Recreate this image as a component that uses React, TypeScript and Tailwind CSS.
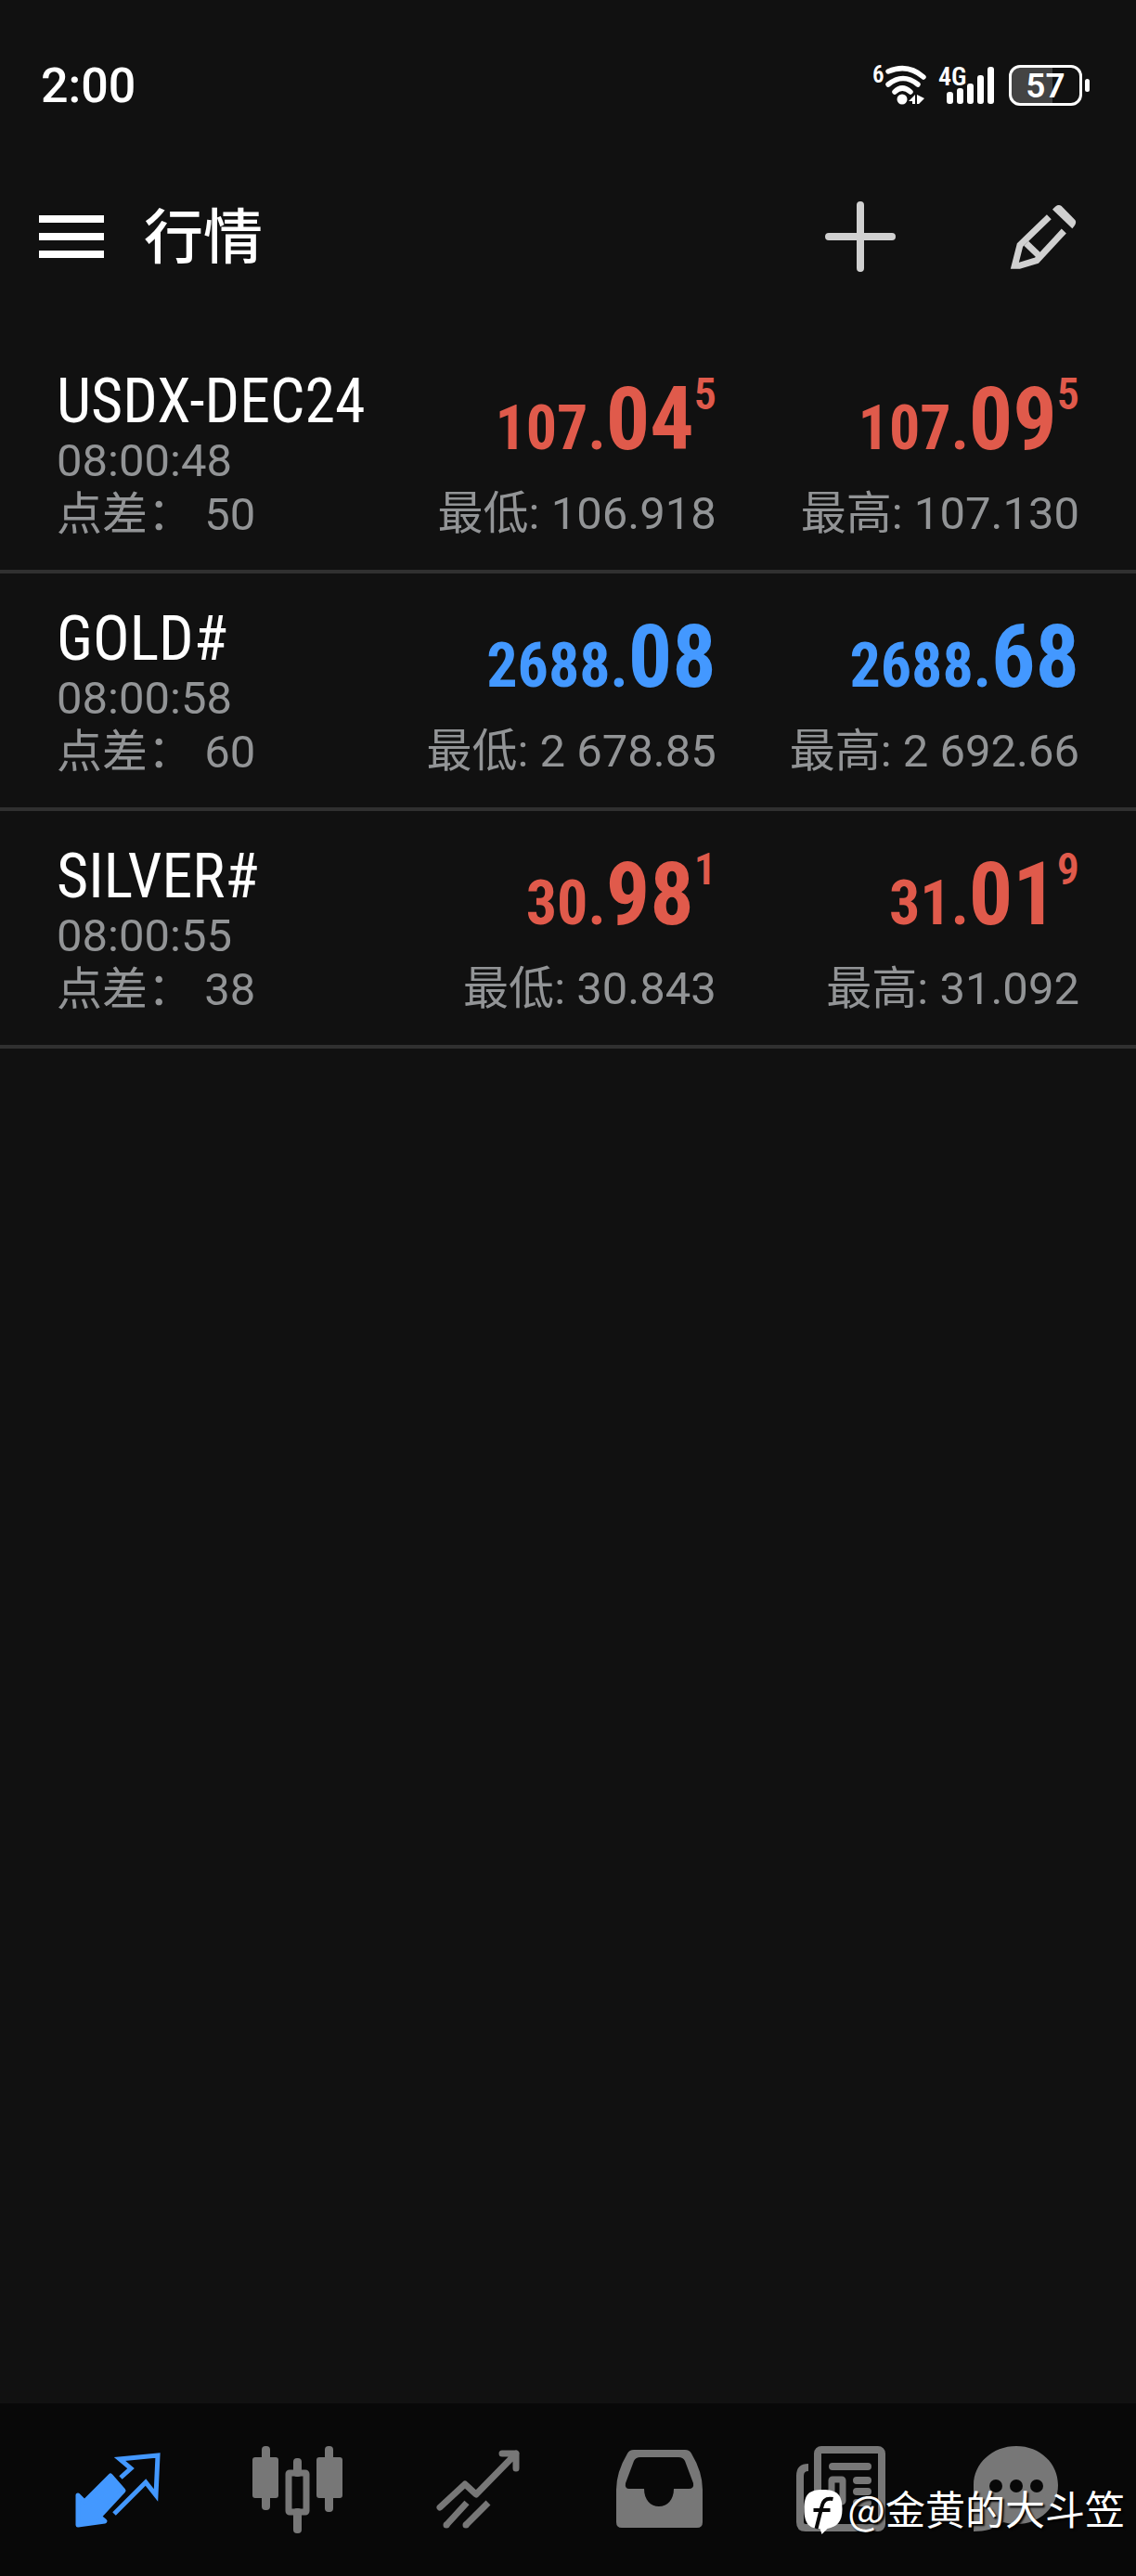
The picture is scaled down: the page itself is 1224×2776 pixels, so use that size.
import React from 'react';

interface Price {
  base: string;
  big: string;
  pip?: string;
}

interface Quote {
  symbol: string;
  time: string;
  spread: number;
  trend: 'up' | 'down';
  bid: Price;
  ask: Price;
  low: string;
  high: string;
}

const quotes: Quote[] = [
  {
    symbol: 'USDX-DEC24',
    time: '08:00:48',
    spread: 50,
    trend: 'down',
    bid: { base: '107.', big: '04', pip: '5' },
    ask: { base: '107.', big: '09', pip: '5' },
    low: '106.918',
    high: '107.130',
  },
  {
    symbol: 'GOLD#',
    time: '08:00:58',
    spread: 60,
    trend: 'up',
    bid: { base: '2688.', big: '08' },
    ask: { base: '2688.', big: '68' },
    low: '2 678.85',
    high: '2 692.66',
  },
  {
    symbol: 'SILVER#',
    time: '08:00:55',
    spread: 38,
    trend: 'down',
    bid: { base: '30.', big: '98', pip: '1' },
    ask: { base: '31.', big: '01', pip: '9' },
    low: '30.843',
    high: '31.092',
  },
];

const StatusBar: React.FC = () => (
  <div className="flex h-[184px] items-start justify-between pt-[62px] pr-[50px] pl-[44px]">
    <span className="text-[52px] leading-[62px] font-medium">2:00</span>
    <div className="flex h-[60px] items-center">
      {/* Wi-Fi 6 */}
      <svg className="mr-2 h-[60px] w-[62px]" viewBox="940 61 62 60" fill="none" stroke="#fff" strokeWidth="5.5" aria-hidden="true">
        <text x="940" y="88" fontSize="25" fontWeight="600" fill="#fff" stroke="none" className="font-['Roboto_Condensed',Roboto,sans-serif]">6</text>
        <path d="M957 76Q978 67 995 82" strokeLinecap="round" />
        <path d="M957 90Q973 77 989 90" strokeLinecap="round" />
        <path d="M964 98Q972 90 981 98" strokeLinecap="round" />
        <circle cx="972" cy="106" r="5.5" fill="#fff" stroke="none" />
        <path d="M986 101V111H983V108H979ZM988 111V101L996 105L990 111Z" fill="#fff" stroke="none" />
      </svg>
      {/* Mobile signal */}
      <svg className="mr-[15px] h-[60px] w-[62px]" viewBox="1010 61 62 60" aria-hidden="true">
        <text x="1011" y="91" fontSize="28" fontWeight="600" fill="#fff" className="font-['Roboto_Condensed',Roboto,sans-serif]">4G</text>
        <g fill="#fff">
          <rect x="1020" y="98" width="7" height="13" rx="3" />
          <rect x="1031" y="94" width="7" height="17" rx="3" />
          <rect x="1042" y="89" width="7" height="22" rx="3" />
          <rect x="1053" y="80" width="7" height="31" rx="3" />
          <rect x="1064" y="71" width="7" height="40" rx="3" />
        </g>
      </svg>
      <div className="flex items-center gap-[3px]">
        <div className="flex h-11 w-[79px] items-center justify-center rounded-xl border-[3px] border-white bg-linear-to-r from-[#444] from-60% to-transparent to-60% text-[37px] leading-none font-semibold">
          57
        </div>
        <div className="h-[14px] w-[5px] rounded-full bg-white" />
      </div>
    </div>
  </div>
);

const Header: React.FC = () => (
  <header className="flex h-[142px] items-center pr-[61px] pl-[42px]">
    <button type="button" aria-label="菜单" className="flex w-[70px] flex-col gap-[11px]">
      <span className="h-2 bg-white" />
      <span className="h-2 bg-white" />
      <span className="h-2 bg-white" />
    </button>
    <h1 className="ml-[43px] flex-1 pt-1 text-[64px] leading-none font-medium">行情</h1>
    <button type="button" aria-label="添加" className="mr-[120px]">
      <svg className="size-20" viewBox="0 0 80 80" stroke="#d0d0d0" strokeWidth="8" strokeLinecap="round">
        <path d="M40 6V74M6 40H74" />
      </svg>
    </button>
    <button type="button" aria-label="编辑">
      <svg className="size-[76px]" viewBox="682 530 228 228" fill="none" stroke="#d0d0d0" strokeWidth="21">
        <path d="M812 580L718 671L701 738H716L772 721L860 626" />
        <path d="M738 666L782 708" />
        <path d="M823 556C832 545 842 537 852 545L896 590C902 598 896 608 887 618Z" fill="#d0d0d0" stroke="none" />
      </svg>
    </button>
  </header>
);

const PriceCell: React.FC<{ price: Price; label: string; value: string; color: string }> = ({ price, label, value, color }) => (
  <div className="text-right whitespace-nowrap">
    <p className={`font-['Roboto_Condensed',Roboto,sans-serif] text-[66px] leading-[108px] font-bold ${color}`}>
      {price.base}
      <span className="text-[94px]">{price.big}</span>
      {price.pip && <span className="align-[43px] text-[48px] leading-none font-semibold">{price.pip}</span>}
    </p>
    <p className="mt-[9px] text-[49px] leading-[58px] text-[#929496]">
      {label}: {value}
    </p>
  </div>
);

const QuoteRow: React.FC<{ quote: Quote }> = ({ quote }) => {
  const color = quote.trend === 'up' ? 'text-[#4398ff]' : 'text-[#e05a4b]';

  return (
    <li className="grid grid-cols-[29%_1fr_1fr] border-b-4 border-[#303030] px-[61px] pt-9 pb-[30px]">
      <div className="text-[49px] leading-[58px] whitespace-nowrap text-[#929496]">
        <h2 className="font-['Roboto_Condensed',Roboto,sans-serif] text-[66px] leading-[70px] text-white">
          {quote.symbol}
        </h2>
        <p>{quote.time}</p>
        <p>点差： {quote.spread}</p>
      </div>
      <PriceCell price={quote.bid} label="最低" value={quote.low} color={color} />
      <PriceCell price={quote.ask} label="最高" value={quote.high} color={color} />
    </li>
  );
};

const tabs = [
  {
    name: '行情',
    icon: (
      <svg className="size-[100px]" viewBox="75 62 100 100" fill="none" stroke="#4398ff" strokeWidth="5">
        <path d="M119 97L133 113L107 141L113 146L84 150V118L91 125Z" fill="#4398ff" strokeLinejoin="round" />
        <path d="M130 99L141 89L129 79L170 75L168 118L157 104L123 138" />
      </svg>
    ),
  },
  {
    name: '图表',
    icon: (
      <svg className="size-[100px]" viewBox="270 62 100 100" fill="#777">
        <rect x="272" y="77" width="28" height="44" rx="3" />
        <rect x="282" y="65" width="9" height="69" rx="4" />
        <rect x="341" y="77" width="28" height="44" rx="3" />
        <rect x="350" y="65" width="9" height="71" rx="4" />
        <rect x="316" y="78" width="9" height="20" rx="4" />
        <rect x="316" y="132" width="9" height="27" rx="4" />
        <rect x="311" y="94" width="19" height="42" rx="1" fill="none" stroke="#777" strokeWidth="7" />
      </svg>
    ),
  },
  {
    name: '交易',
    icon: (
      <svg className="size-[100px]" viewBox="465 62 100 100" fill="none" stroke="#777" strokeWidth="7">
        <path d="M474 131L501 106L513 117L556 73M541 73H556V89" strokeLinecap="round" strokeLinejoin="round" />
        <path d="M481 150L503 126M502 150L526 126" />
        <circle cx="481" cy="150" r="3.5" fill="#777" stroke="none" />
        <circle cx="502" cy="150" r="3.5" fill="#777" stroke="none" />
      </svg>
    ),
  },
  {
    name: '历史',
    icon: (
      <svg className="size-[100px]" viewBox="659 62 100 100" fill="#777" fillRule="evenodd">
        <path d="M683 69H738Q743 69 745 73Q757 93 757 112V147Q757 153 751 153H670Q664 153 664 147V112Q664 93 676 73Q678 69 683 69ZM690 77Q685 77 683 81L674 105Q673 111 678 111H694C694 123 701 130 710 130S726 123 726 111H742Q748 111 747 105L738 81Q736 77 731 77Z" />
      </svg>
    ),
  },
  {
    name: '新闻',
    icon: (
      <svg className="size-[100px]" viewBox="854 62 100 100" fill="none" stroke="#777" strokeWidth="8">
        <rect x="881" y="69" width="69" height="84" rx="4" />
        <path d="M871 88Q862 88 862 97V147Q862 153 868 153H890" />
        <path d="M897 87H935M923 102H935M923 114H935M923 126H935" strokeLinecap="round" />
        <rect x="896" y="101" width="12" height="24" rx="1" strokeWidth="7" />
      </svg>
    ),
  },
  {
    name: '消息',
    icon: (
      <svg className="size-[100px]" viewBox="1049 62 100 100" fill="#777">
        <path d="M1095 65C1121 65 1140 84 1140 107C1140 131 1120 149 1096 149C1090 149 1085 148 1081 147C1073 154 1061 157 1049 157V107C1049 84 1069 65 1095 65Z" />
        <g fill="#080808">
          <circle cx="1073" cy="108" r="7" />
          <circle cx="1095" cy="108" r="7" />
          <circle cx="1117" cy="108" r="7" />
        </g>
      </svg>
    ),
  },
];

const App: React.FC = () => (
  <div className="relative flex min-h-screen flex-col bg-[#111] font-[Roboto,'Noto_Sans_CJK_SC',sans-serif] text-white">
    <StatusBar />
    <Header />

    <main className="flex-1 pt-9">
      <ul>
        {quotes.map((quote) => (
          <QuoteRow key={quote.symbol} quote={quote} />
        ))}
      </ul>
    </main>

    <nav className="flex h-[186px] items-center bg-[#080808] px-7">
      {tabs.map((tab) => (
        <button key={tab.name} type="button" aria-label={tab.name} className="flex flex-1 justify-center">
          {tab.icon}
        </button>
      ))}
    </nav>

    {/* Author watermark over the tab bar */}
    <div className="absolute right-3 bottom-12 flex items-end gap-1 text-[43px] leading-[52px] [text-shadow:2px_2px_2px_#000]">
      <svg className="-mb-1 h-[50px] w-11" viewBox="0 0 43 50" aria-hidden="true">
        <path d="M21 1C36 1 42 6 42 22C42 36 36 41 26 43L20 49L18 43C6 43 1 37 1 22C1 6 6 1 21 1Z" fill="#fff" />
        <path d="M32 11Q22 9 20 19L14 43M11 23H29" fill="none" stroke="#080808" strokeWidth="4" />
      </svg>
      <span className="font-['Noto_Sans_CJK_SC',sans-serif]">@金黄的大斗笠</span>
    </div>
  </div>
);

export default App;
